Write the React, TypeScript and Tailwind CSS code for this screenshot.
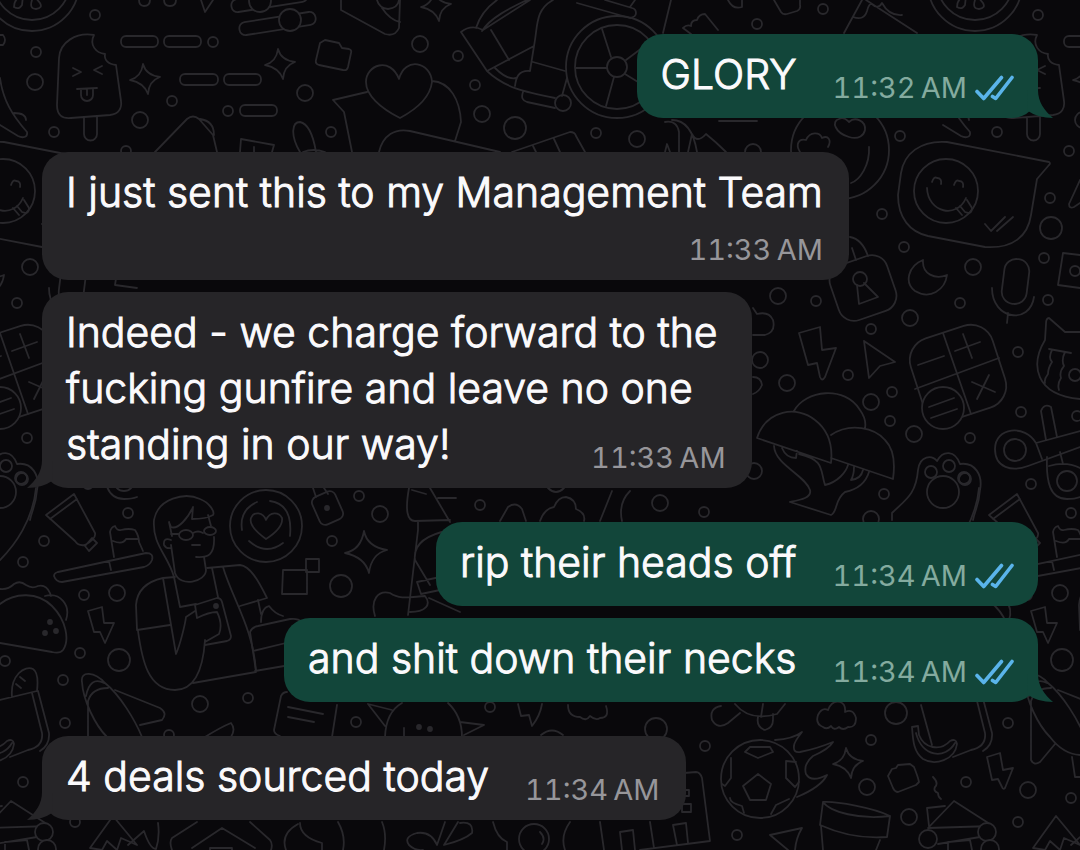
import { clsx } from "clsx";

/* ═══════════════════════════════════════════════════════════════
   Data
   ═══════════════════════════════════════════════════════════════ */

interface Message {
  id: number;
  text: string;
  time: string;
  mine?: boolean;
  tail?: boolean;
  /* time stamp sits on a row of its own */
  timeBelow?: boolean;
}

/* Consecutive messages of one sender are grouped */
const groups: Message[][] = [
  [{ id: 1, text: "GLORY", time: "11:32\u202FAM", mine: true, tail: true }],
  [
    {
      id: 2,
      text: "I just sent this to my Management Team",
      time: "11:33\u202FAM",
      timeBelow: true,
    },
    {
      id: 3,
      text: "Indeed - we charge forward to the\nfucking gunfire and leave no one\nstanding in our way!",
      time: "11:33\u202FAM",
      tail: true,
    },
  ],
  [
    { id: 4, text: "rip their heads off", time: "11:34\u202FAM", mine: true },
    {
      id: 5,
      text: "and shit down their necks",
      time: "11:34\u202FAM",
      mine: true,
      tail: true,
    },
  ],
  [{ id: 6, text: "4 deals sourced today", time: "11:34\u202FAM", tail: true }],
];

/* ═══════════════════════════════════════════════════════════════
   Wallpaper — line doodles, repeated every 943 units
   ═══════════════════════════════════════════════════════════════ */

const TILE = 943;

/* x, y, radius */
const bubbles: [number, number, number][] = [
  [95, 15, 5], [36, 52, 5], [35, 82, 8], [54, 132, 5], [140, 120, 8],
  [172, 101, 5], [213, 42, 5], [228, 111, 5], [305, 93, 8], [331, 132, 5],
  [126, 151, 5], [420, 44, 8], [458, 56, 5], [475, 85, 5], [482, 114, 8],
  [515, 128, 11], [596, 133, 5], [637, 139, 8], [757, 24, 5], [823, 9, 5],
  [753, 152, 8], [900, 136, 5], [882, 214, 5], [904, 247, 5], [973, 267, 8],
  [1050, 198, 5], [1051, 228, 11], [1044, 258, 5], [960, 303, 5],
  [1048, 300, 5], [778, 296, 8], [816, 301, 5], [871, 329, 5], [910, 318, 8],
  [760, 360, 8], [848, 375, 5], [787, 383, 8], [892, 392, 5], [871, 402, 8],
  [890, 421, 5], [914, 434, 8], [970, 438, 5], [1018, 352, 5],
  [1021, 412, 5], [1077, 416, 5], [754, 471, 8], [884, 494, 5],
  [1031, 484, 5], [871, 519, 8], [21, 478, 6], [128, 513, 5], [44, 541, 5],
  [23, 562, 5], [84, 595, 5], [117, 593, 8], [80, 653, 5], [119, 660, 11],
  [63, 680, 5], [5, 661, 5], [65, 723, 5], [200, 704, 8], [248, 698, 5],
  [169, 735, 5], [359, 496, 5], [380, 514, 8], [332, 541, 5],
  [341, 586, 11], [356, 722, 5], [490, 707, 5], [656, 729, 11],
  [705, 746, 5], [737, 835, 5], [896, 713, 11], [871, 740, 5],
  [867, 787, 8], [909, 817, 8], [966, 782, 5], [1018, 822, 5],
  [1028, 790, 8], [1071, 798, 5], [480, 505, 5], [660, 503, 8], [704, 512, 5],
];

/* x, y, width, height, radius, rotation */
const boxes: [number, number, number, number, number, number][] = [
  [121, 36, 37, 11, 5, 0], [164, 36, 37, 11, 5, 0], [180, 74, 38, 11, 5, 0],
  [224, 74, 37, 11, 5, 0], [240, 105, 37, 11, 5, 0], [239, 17, 77, 13, 6, -9],
  [231, -6, 77, 13, 6, -9], [833, 259, 60, 58, 16, -19],
  [1003, 259, 25, 45, 12, 7], [915, 330, 86, 86, 23, -18],
  [315, 493, 25, 30, 6, -24], [306, 559, 13, 13, 0, 0],
  [682, 804, 9, 8, 0, 0], [682, 790, 7, 6, 0, 0],
];

/* centre x, centre y, reach */
const sparkles: [number, number, number][] = [
  [145, 79, 15], [280, 64, 15], [436, 6, 15], [848, 763, 15], [366, 552, 21],
];

const strokes = [
  // melon slices and drops along the top edge
  "M14 7q5 3 8-2l1-9M23-4q-9 2-9 11M32 0q-3 9 4 9q7-1 4-6l-5-6M139 0q0 6 5 6q6 0 6-6M164 0q0 6 6 6q6 0 6-6M201 0l4 12 8-12",
  // ice lolly
  "M94 35C76 32 60 42 59 58L57 105C57 115 62 119 71 118L110 115C119 114 122 108 121 101L116 65C108 64 104 60 105 54C96 53 89 45 94 35ZM84 118v16a6 6 0 0 0 13 0v-17M73 68l8 4-8 4M102 66l-8 4 8 4M77 89l20-1M81 89v6a6 6 0 0 0 12 0v-6M87 89v6",
  "M0 35h3q4 5 0 10H0M0 78C3 100 12 115 27 132C28 138 22 138 18 136L0 125M14 113q12 0 12 7",
  // toy bricks
  "M320 43l5-3 14 3 3 5 7 1q3 1 2 4l-3 14q-1 4-5 3l-24-5q-4-1-3-5zM888 776l4-7 4-1 2-3 12-1 4 3q4 10 5 15l-3 3-18 7q-3 0-5-4z",
  "M155 152L187 119q6-5 12 0L213 135L217 152M200 119q14 2 14 16M240 152L241 139L274 145L272 152M254 152v-5M300 152C290 135 292 122 300 122C310 124 314 140 316 152M303 152q10-4 22 0",
  // heart in a hand
  "M400 118C380 108 366 95 366 82C366 65 390 56 399 79C405 56 431 62 432 82C430 98 415 110 400 118ZM432 81C450 82 460 100 461 122L455 141M379 152C383 135 395 128 410 131L500 152M367 92L333 100L344 112L352 152M341 0v10L385 34q10 3 14-6L400 0M377 0q2 8 11 9q10-1 11-9M382 8q8 12 18 14",
  // wheelchair
  "M476 28C480 15 490 5 497 0M482 31C490 18 510 8 527 0M461 32q10-8 22-2L530 0M461 32L487 71L534 46M491 30L509 60M487 71C505 88 525 92 555 98M495 68q12 12 21 10M553 0C535 10 538 25 534 46L530 71C518 70 516 78 515 86M533 62L565 71M567 78l-5 18M523 92q-3 8 4 10L555 108M602 29l9 28M576 68h31M614 77l-8 29M626 60l20-15M625 74l26 16M577 3L630 18q6-1 6-5t-4-5L605 0M630 7l5-7M671 0l-8 33",
  "M512 152L570 132q5 0 6 4L585 152M533 146l3 6M554 139l6 13M683 28q4-4 8-2 0-6 6-6 2-6 8-6L718 30M683 28l8 6M728 0q5 10 14 7V0M774 0l7 12q2 3 6 2l10-3q4-2 3-6V0",
  // pizza
  "M862 0L844 33M866 0L917 33M853 17q11 4 14-6 2-8 5-7 6 6 10-1 7 13 20 12",
  "M665 122q12-2 14 10v20M665 152l2-8 3 8M672 120C690 120 695 140 697 152M688 152l4-18q5 10 14 0 10 8 20 18M719 121h38",
  // hearts-for-eyes face
  "M800 152c-5-8-1-14 6-12 4-9 14-8 16-2 6-3 10 2 6 9M849 137c-14-4-18-16-10-18 5-3 9 2 10 3 6-6 17-1 16 8-1 5-6 10-16 7M869 147C870 165 860 180 851 183",
  // chat bubble
  "M1049 162L947 142C920 140 904 154 901 173L898 195C898 218 910 232 928 236L985 247C1013 249 1028 236 1031 215L1037 179L1049 165q2-2 0-3M932 182q2-6 5-4 5 0 4 6M954 185q2-6 5-4 5 0 4 6M927 188C928 213 957 219 966 198M956 208l6 7M960 206l5 6q7 3 7-4l-5-8M985 224l6 7 14-14M997 231l16-14M1080 180l-11 24q0 5 5 3l6-4",
  // padlock, moon, microphone
  "M850 237q12 2 18 19M852 248l4 12M857 285l2 19 19-7-14-14M923 260C908 266 904 283 915 291C930 300 945 290 947 275C935 280 922 274 923 260ZM992 288C992 320 1030 325 1034 297M1008 313l-1 10M1080 255l-17-2-5 32 22 3",
  "M753 308l4 6q12-3 16 6 3 12-8 15h-12M753 377q8 0 9 8-3 7-9 9M799 333L820 327L822 350L836 348L825 377Q822 382 820 377L817 363L808 365ZM864 341L895 362L880 366L869 378Z",
  // calculator
  "M943 333L971 414M915 389L999 358M918 365l26-9M955 351l25-9M963 334l9 24M972 382l23 10M989 375l-12 24",
  // cat
  "M1080 332h-15L1049 318q-3 0-3 6l-1 16C1030 365 1035 395 1080 399M1049 349l22 4M1052 350q-4 8 0 12-4 6-4 12-4 5-3 9M1065 352q-4 8-1 14-5 6-3 12-4 6-2 12",
  // mushrooms
  "M757 438C766 410 797 405 815 420C828 430 833 445 831 463ZM794 411C805 390 845 385 860 410C865 417 866 423 865 428M831 435C850 422 875 428 885 440C895 450 895 465 893 479L831 458M774 446C775 465 805 475 810 490C812 498 800 500 790 502L831 515C838 512 834 500 845 492C855 490 865 485 869 472M799 454C825 460 820 470 825 485C838 482 846 472 848 465M782 448q4 10 14 10l1-7M854 467q0 8-3 13 10-1 12-10",
  // paw
  "M892 520v-7C905 500 916 495 918 470C920 455 932 455 937 461C943 450 955 450 960 464C975 462 983 475 980 490C979 505 975 510 973 520",
  // scissors
  "M1080 431L1036 443C1025 424 995 427 995 449C995 468 1012 472 1028 466L1080 447M1036 443l6 16M1046 440L1041 411q3-8 10-4L1057 437M1047 457C1046 482 1050 499 1067 499q8 0 13-2M1060 452l3 12M1049 466q17-5 31 2",
  // tube and toothbrush
  "M46 515L74 494L95 533C96 537 92 541 85 545C80 546 77 544 75 541ZM50 519L77 499M85 546L92 538L97 543L89 551ZM36 488C33 520 15 545 0 560",
  "M58 572L146 553q8 0 6 7-2 5-8 7L62 582q-6 0-8-6 0-3 4-4M109 561l2 9M114 557L110 532q1-5 5-6 2 5 6 4 8-2 14 0 4 6 4 12L143 551M113 541q10 4 13-2h12",
  // taco
  "M0 589q8 1 14-5 6-4 12 1 6 4 12 1 8-2 12 7l1 3M0 604C15 592 38 592 52 606C66 620 70 640 63 650Q60 654 52 652L0 643M45 596C60 592 71 605 66 620",
  "M88 611l14-4 2 16h10L105 643l-5-11h-6ZM987 757l13-4 3 17 10-2-8 20q-2 2-3-1l-4-8-6 1Z",
  // barista
  "M174 577C168 555 152 545 154 520C158 498 185 492 200 499C210 503 215 512 213 515C208 518 200 519 192 519L193 507C188 518 178 530 171 527L169 522L172 536M171 534h8M193 533q5-3 10 0M208 515l3 11M214 537C215 555 208 558 196 557M204 557L206 570C206 582 180 588 175 573L171 545M171 540q-8-3-7 5 2 4 7 3M192 545h8",
  "M175 577L163 578C145 582 137 592 136 605L137 630L170 625M207 568L240 565C250 566 258 580 267 598L240 606M138 631C142 660 148 690 175 690C195 690 203 670 205 640M163 578L176 654C180 645 185 625 186 617L195 611M174 577L180 607L196 604M212 568L218 597M223 567C232 598 254 630 256 672L193 683M195 605L217 598q4 0 5 4L231 636q0 4-4 5L205 645M195 605l2 13q12-6 20-6 6 12 2 22l-14 8",
  "M258 600l3 14M261 622q0-14 8-16 6 8 14 10M250 632q2-5 8-6L290 619q8-1 12 3M250 632l6 39M253 651L290 642M255 671L290 665",
  // heart plate
  "M266 539C255 531 249 524 251 518C254 511 263 512 266 520C270 511 279 512 282 518C283 525 277 532 266 539ZM242 530q-3-20 15-28M270 501q23 3 20 35M249 541q17 15 34 2",
  "M313 488l3 9M324 488l4 6M283 570h24v24h-25ZM409 488C405 510 407 521 415 521L450 520M412 490l14 4M430 488l20 34M438 498h18M418 521v9L408 615M450 530C425 535 413 545 415 560L430 585M440 577L417 582l4 12 19-4M375 616C370 600 378 590 390 593C400 600 410 597 425 596C432 605 425 612 410 612M429 598L460 612",
  "M500 521l8-14q8-6 14 2l4 12M540 521q4-12 14-14 4-10 12-10 10 2 10 12 10 4 8 12M548 488q8 8 16 0M600 521l12-30M622 521q-4-18 8-30",
  // rocket
  "M82 682C80 670 95 672 105 683C120 695 135 720 142 737M82 682C83 700 95 725 107 737Q120 754 137 755M86 696Q90 676 104 683M88 701Q92 688 108 688M88 701V760q3 6 9 2L112 744M115 690L160 708q8 5 2 12L140 725M205 737q16-10 26-14 5 6 0 14M129 757l3 20h6",
  // notepad, sun
  "M287 692q-4 0-6 4L274 730q0 4 6 6M337 705l-5 32M288 707l35 7M288 717l26 5M385 737Q386 712 402 703M448 703Q462 716 462 737M368 704l17 22M368 704l24 6M460 722l24 3-20 10M404 728v9",
  "M518 704l3 12 8-1 3 11q8-10 10-22M568 705q0 12 12 12 6 5 10-1 6 5 10 2 10 0 6-12M541 735q11-9 22 0",
  // shopping bag and bananas
  "M921 705L932 745M975 693L985 733C986 742 981 748 971 750L953 757M981 691L992 733Q993 745 983 751M955 697C953 675 968 665 976 669C981 672 981 682 980 691M943 700l37-9M963 677l5 4M959 684l5 4M912 727l6-1 1 9C924 748 940 752 950 741q6-3 7 3C955 760 935 766 923 759C914 752 913 742 912 727M916 733C922 757 945 760 955 743",
  "M721 706q-12 2-9 14 6 10 16 3L740 713M735 704q15 18 42 10L785 704M758 717q-2 10 7 13 8-2 8-10v-6M763 704l-2 13M823 727q-8-3-5-12 4-8 10-5 4-10 12-8 6 2 5 10 8-4 11 6 0 10-8 9-5 4-9 0-5 4-8-1-4 4-8 1Z",
  // flying football
  "M758 774L771 784L766 800H750L743 786ZM745 752l5-5h20l3 5-15 6ZM731 758v20l-6 8-3-2M796 762l-10-1v17l9 9 4-5M730 798q0 5 12 8l2 7M771 814l5-9 13-6M775 740q18-1 27-8-8 10-8 14-1 7 6 6 16-3 33-10-4 7-20 14-10 8-7 18 5 9 21 1-6 12-30 22",
  // bottom row
  "M933 777q6 6 2 10-2 4 3 6 0 4 3 6M770 835L802 828q-6 10-7 22M770 835L788 850M823 802C836 801 874 808 890 816L887 837C862 839 840 834 820 825ZM823 802C830 812 860 820 890 816M821 826l2 24M880 840l-4 10M928 828L954 801L993 826ZM945 806l-18 2 2 18M938 844L980 837M948 850v-8l22-2 2 10M1033 848L1056 816L1080 845L1064 838L1060 850L1050 841L1045 850Z",
  "M684 773l12-1q4 0 6 6L710 841L640 850M673 825l13-2 2 20M673 825l4 20M620 832l13-2 2 20M620 832l2 18M600 822l4 28M650 822l4 26",
  "M128 845l16-14q6 18 12 18 4-12 2-26M197 822L172 838q-3 4 0 12M250 822L270 840q3 4 1 10M192 848L222 828L255 848M210 850v-2h22v2M300 823q0 14 22 20v7M298 824q-18 10-12 26M338 822q8 14 5 28M382 822q5 12 2 28M445 822l-8 23M458 822l-14 23q20-5 28-12 2-12-12-10M437 845q-6-14-20-12-14 4-8 12 6 6 14 5M493 822q4 16 14 20v8M540 832q6 6 2 12M570 822q-10 14-5 28",
];

/* x, y, radius of circles that belong to a bigger drawing */
const rings: [number, number, number][] = [
  [32, -16, 47], [32, -18, 38], [260, 1, 11], [290, 20, 11], [563, 103, 8],
  [617, 67, 51], [617, 67, 42], [617, 67, 10], [840, 150, 49],
  [946, 191, 32], [860, 279, 7], [1075, 271, 5], [943, 408, 21],
  [1075, 375, 6], [931, 472, 6], [949, 466, 6], [965, 479, 6], [943, 492, 16],
  [1015, 450, 11], [1067, 481, 10], [266, 526, 36], [760, 779, 39],
  [928, 839, 9], [987, 832, 9], [990, 849, 9], [534, 839, 15],
];

const dots: [number, number][] = [
  [50, 622], [45, 633], [56, 631], [327, 508], [216, 606], [419, 727], [430, 729],
];

function sparkle(x: number, y: number, r: number) {
  const n = r / 4;
  return `M${x - 2} ${y - r}Q${x + 1} ${y - n} ${x + r} ${y - 2}Q${x + n} ${y + 2} ${x + 3} ${y + r}Q${x - 1} ${y + n} ${x - r} ${y + 1}Q${x - n} ${y - 2} ${x - 2} ${y - r}Z`;
}

function Wallpaper() {
  return (
    <svg
      aria-hidden="true"
      viewBox="0 0 1080 850"
      preserveAspectRatio="xMidYMin slice"
      className="absolute inset-0 h-full w-full"
      fill="none"
      stroke="#29282c"
      strokeWidth="1.8"
      strokeLinecap="round"
      strokeLinejoin="round"
    >
      <defs>
        <g id="doodles">
          {boxes.map(([x, y, w, h, r, a], i) => (
            <rect
              key={i}
              x={x}
              y={y}
              width={w}
              height={h}
              rx={r}
              transform={`rotate(${a} ${x + w / 2} ${y + h / 2})`}
            />
          ))}
          {strokes.map((d, i) => (
            <path key={i} d={d} />
          ))}
          {sparkles.map(([x, y, r], i) => (
            <path key={i} d={sparkle(x, y, r)} />
          ))}
          {bubbles.map(([x, y, r], i) => (
            <circle key={i} cx={x} cy={y} r={r} />
          ))}
          {rings.map(([x, y, r], i) => (
            <circle
              key={i}
              cx={x}
              cy={y}
              r={r}
              fill={r === 21 || r === 11 || r === 9 ? "#09080b" : "none"}
            />
          ))}
          {dots.map(([x, y], i) => (
            <circle key={i} cx={x} cy={y} r={2} fill="#29282c" />
          ))}
          <ellipse cx="186" cy="535" rx="7" ry="5" />
          <ellipse cx="210" cy="531" rx="6" ry="4" />
          <path d="M929 407l25-9M931 418l26-9" />
        </g>
      </defs>
      <use href="#doodles" x={-TILE} />
      <use href="#doodles" />
      <use href="#doodles" x={TILE} />
    </svg>
  );
}

/* ═══════════════════════════════════════════════════════════════
   Messages
   ═══════════════════════════════════════════════════════════════ */

function ReadTicks() {
  return (
    <svg
      role="img"
      aria-label="Read"
      viewBox="0 0 39 26"
      className="h-[26px] w-[39px]"
      fill="none"
      stroke="#5ab4ea"
      strokeWidth="3.6"
      strokeLinecap="round"
      strokeLinejoin="round"
    >
      <path d="M2 16.5 8.7 23.5 26.5 2.5" />
      <path d="M17.5 21.5 20.7 23.5 37 2.5" />
    </svg>
  );
}

function Tail({ mine }: { mine?: boolean }) {
  return (
    <svg
      aria-hidden="true"
      viewBox="0 0 26 28"
      className={clsx(
        "absolute bottom-0 h-7 w-[26px]",
        mine ? "-right-[15px] text-[#12463a]" : "-left-[15px] -scale-x-100 text-[#262528]"
      )}
    >
      <path fill="currentColor" d="M0 0H11C11 12 17 20 26 28Q11 28 1 21Z" />
    </svg>
  );
}

function Bubble({ message }: { message: Message }) {
  const { text, time, mine, tail, timeBelow } = message;
  const lines = text.split("\n");
  const last = lines.pop();
  return (
    <li
      className={clsx(
        "relative flow-root w-fit rounded-[26px] py-3 pl-6",
        mine ? "self-end bg-[#12463a] pr-6" : "self-start bg-[#262528] pr-[26px]"
      )}
    >
      {/* light face with a hairline outline, between light and regular */}
      <span className="text-[41px] leading-14 font-light text-[#fbfafc] [-webkit-text-stroke:1px_#fbfafc]">
        {lines.map((line) => (
          <span key={line} className="block pr-2">
            {line}
          </span>
        ))}
        <span className={clsx(timeBelow && "block")}>{last}</span>
      </span>
      <span
        className={clsx(
          "float-right ml-9 flex items-center gap-2 text-[29px] leading-9 tabular-nums",
          timeBelow ? "mt-3" : "mt-6",
          mine ? "text-[#84ab9f]" : "text-[#97969a]"
        )}
      >
        <time>{time}</time>
        {mine && <ReadTicks />}
      </span>
      {tail && <Tail mine={mine} />}
    </li>
  );
}

export default function App() {
  return (
    <main className="relative min-h-screen overflow-hidden bg-[#09080b] font-[Inter,'Liberation_Sans',sans-serif]">
      <Wallpaper />
      <div className="relative flex flex-col gap-[34px] px-[42px] pt-[34px] pb-7">
        {groups.map((group) => (
          <ul key={group[0].id} className="flex flex-col gap-3">
            {group.map((message) => (
              <Bubble key={message.id} message={message} />
            ))}
          </ul>
        ))}
      </div>
    </main>
  );
}
